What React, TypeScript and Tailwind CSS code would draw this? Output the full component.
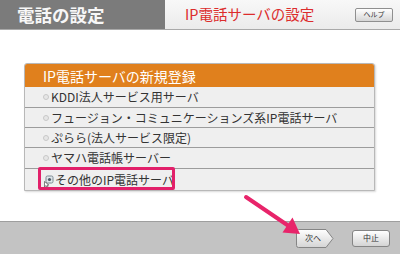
export default function App() {
  const rows = [
    { label: "KDDI法人サービス用サーバ", h: "h-[21px]" },
    { label: "フュージョン・コミュニケーションズ系IP電話サーバ", h: "h-[20px]" },
    { label: "ぷらら(法人サービス限定)", h: "h-[20px]" },
    { label: "ヤマハ電話帳サーバー", h: "h-[21px]" },
  ];
  return (
    <div className="relative flex h-[254px] w-[400px] flex-col overflow-hidden bg-white [font-family:'Noto_Sans_CJK_JP','Noto_Sans',sans-serif]">
      {/* header */}
      <div className="flex h-[30px] shrink-0 border-b border-[#a9a9a9]">
        <div className="flex w-[165px] items-center bg-[#7b7b7b] pl-[17px]">
          <span className="text-[17.5px] font-bold leading-none text-[#f7f7f7]">電話の設定</span>
        </div>
        <div className="flex flex-1 items-center justify-between bg-gradient-to-b from-[#f8f8f8] to-[#ebebeb] pl-[20px] pr-[7px]">
          <span className="text-[14.5px] leading-none text-[#dc2c2c]">IP電話サーバの設定</span>
          <div className="flex h-[14px] w-[38px] items-center justify-center rounded-[2px] border border-[#8f8f8f] bg-gradient-to-b from-white to-[#d6d6d6] text-[7px] leading-none text-[#333]">
            ヘルプ
          </div>
        </div>
      </div>

      {/* body */}
      <div className="flex-1 pl-[24px] pr-[25px] pt-[33px]">
        <div className="relative rounded-t-[3px] border border-[#b8b8b8] bg-[#efefef] shadow-[1px_1px_2px_rgba(0,0,0,0.15)]">
          <div className="flex h-[23px] items-center rounded-t-[2px] bg-[#e0801d] pl-[18px]">
            <span className="text-[14px] leading-none text-white">IP電話サーバの新規登録</span>
          </div>
          {rows.map((r) => (
            <div key={r.label} className={`flex ${r.h} items-center border-b border-[#9c9c9c] pl-[18px]`}>
              <span className="h-[6px] w-[6px] rounded-full border border-[#c8c8c8] bg-[#e6e6e6]" />
              <span className="ml-[2px] text-[12px] leading-none text-[#333]">{r.label}</span>
            </div>
          ))}
          <div className="flex h-[21px] items-center pl-[19px]">
            <svg width="10" height="14" viewBox="0 0 10 14" className="mt-[2px]">
              <rect x="2" y="2" width="7" height="7" rx="1.5" fill="#dfe6ea" stroke="#7d8a92" strokeWidth="1" />
              <circle cx="5.5" cy="5.5" r="1.6" fill="#4a5a66" />
              <path d="M0.5 7.5 L0.5 13 L2 11.6 L3.2 13.5 L4 13 L3 11.2 L4.8 11 Z" fill="#fff" stroke="#333" strokeWidth="0.6" />
            </svg>
            <span className="ml-[1px] text-[12px] leading-none text-[#333]">その他のIP電話サーバ</span>
          </div>
          {/* highlight annotation */}
          <div className="absolute left-[13px] top-[103px] h-[23px] w-[137px] rounded-[2px] border-[3px] border-[#e2206a]" />
        </div>
      </div>

      {/* footer */}
      <div className="flex h-[33px] shrink-0 items-center justify-end gap-[18px] border-t border-[#9e9e9e] bg-[#c3c3c3] pr-[10px]">
        <div className="relative h-[19px] w-[38px]">
          <svg width="38" height="19" viewBox="0 0 38 19" className="absolute inset-0">
            <defs>
              <linearGradient id="bg1" x1="0" y1="0" x2="0" y2="1">
                <stop offset="0" stopColor="#ffffff" />
                <stop offset="1" stopColor="#d4d4d4" />
              </linearGradient>
            </defs>
            <path d="M2.5 0.5 H30 L37 9.5 L30 18.5 H2.5 Q0.5 18.5 0.5 16.5 V2.5 Q0.5 0.5 2.5 0.5 Z" fill="url(#bg1)" stroke="#858585" strokeWidth="1" />
          </svg>
          <span className="absolute left-[9px] top-[5px] text-[8px] leading-none text-[#333]">次へ</span>
        </div>
        <div className="flex h-[17px] w-[38px] items-center justify-center rounded-[3px] border border-[#858585] bg-gradient-to-b from-white to-[#d4d4d4] text-[8px] leading-none text-[#333]">
          中止
        </div>
      </div>

      {/* pink arrow annotation */}
      <svg className="pointer-events-none absolute left-0 top-0" width="400" height="254" viewBox="0 0 400 254">
        <line x1="246" y1="197" x2="288" y2="225.5" stroke="#e8246a" strokeWidth="4" strokeLinecap="round" />
        <polygon points="300,234 282.5,232.5 292.5,217.5" fill="#e8246a" />
      </svg>
    </div>
  );
}
